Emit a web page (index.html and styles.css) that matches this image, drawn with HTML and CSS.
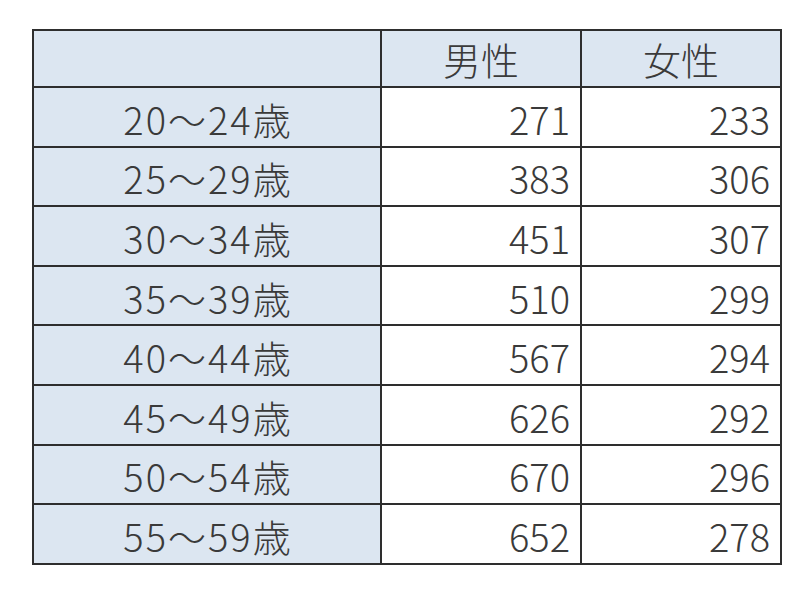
FILE: index.html
```html
<!DOCTYPE html>
<html lang="ja">
<head>
<meta charset="utf-8">
<link rel="stylesheet" href="styles.css">
</head>
<body>
<table class="stats">
  <colgroup>
    <col class="c-age"><col class="c-num"><col class="c-num">
  </colgroup>
  <thead>
    <tr><th class="blank"></th><th>男性</th><th>女性</th></tr>
  </thead>
  <tbody>
    <tr><th>20〜24歳</th><td>271</td><td>233</td></tr>
    <tr><th>25〜29歳</th><td>383</td><td>306</td></tr>
    <tr><th>30〜34歳</th><td>451</td><td>307</td></tr>
    <tr><th>35〜39歳</th><td>510</td><td>299</td></tr>
    <tr><th>40〜44歳</th><td>567</td><td>294</td></tr>
    <tr><th>45〜49歳</th><td>626</td><td>292</td></tr>
    <tr><th>50〜54歳</th><td>670</td><td>296</td></tr>
    <tr><th>55〜59歳</th><td>652</td><td>278</td></tr>
  </tbody>
</table>
</body>
</html>
```
FILE: styles.css
```css
html, body {
  margin: 0;
  padding: 0;
  background: #ffffff;
}
body {
  padding: 29px 0 0 32px;
  font-family: "Noto Sans CJK JP", "Noto Sans", sans-serif;
  color: #3a3a3a;
}
.stats {
  border-collapse: collapse;
  table-layout: fixed;
  width: 750px;
}
.c-age { width: 348px; }
.c-num { width: 200px; }
.stats th,
.stats td {
  border: 2px solid #2e2e2e;
  height: 53.6px;
  padding: 0 10px;
  font-size: 38px;
  font-weight: 300;
  line-height: 1;
  vertical-align: middle;
}
.stats thead th {
  background: #dce6f1;
  text-align: center;
  height: 55px;
}
.stats tbody th {
  background: #dce6f1;
  text-align: center;
  padding-top: 4px;
  letter-spacing: 2px;
  text-indent: 2px;
}
.stats tbody td {
  background: #ffffff;
  text-align: right;
  padding-top: 4px;
}
```
